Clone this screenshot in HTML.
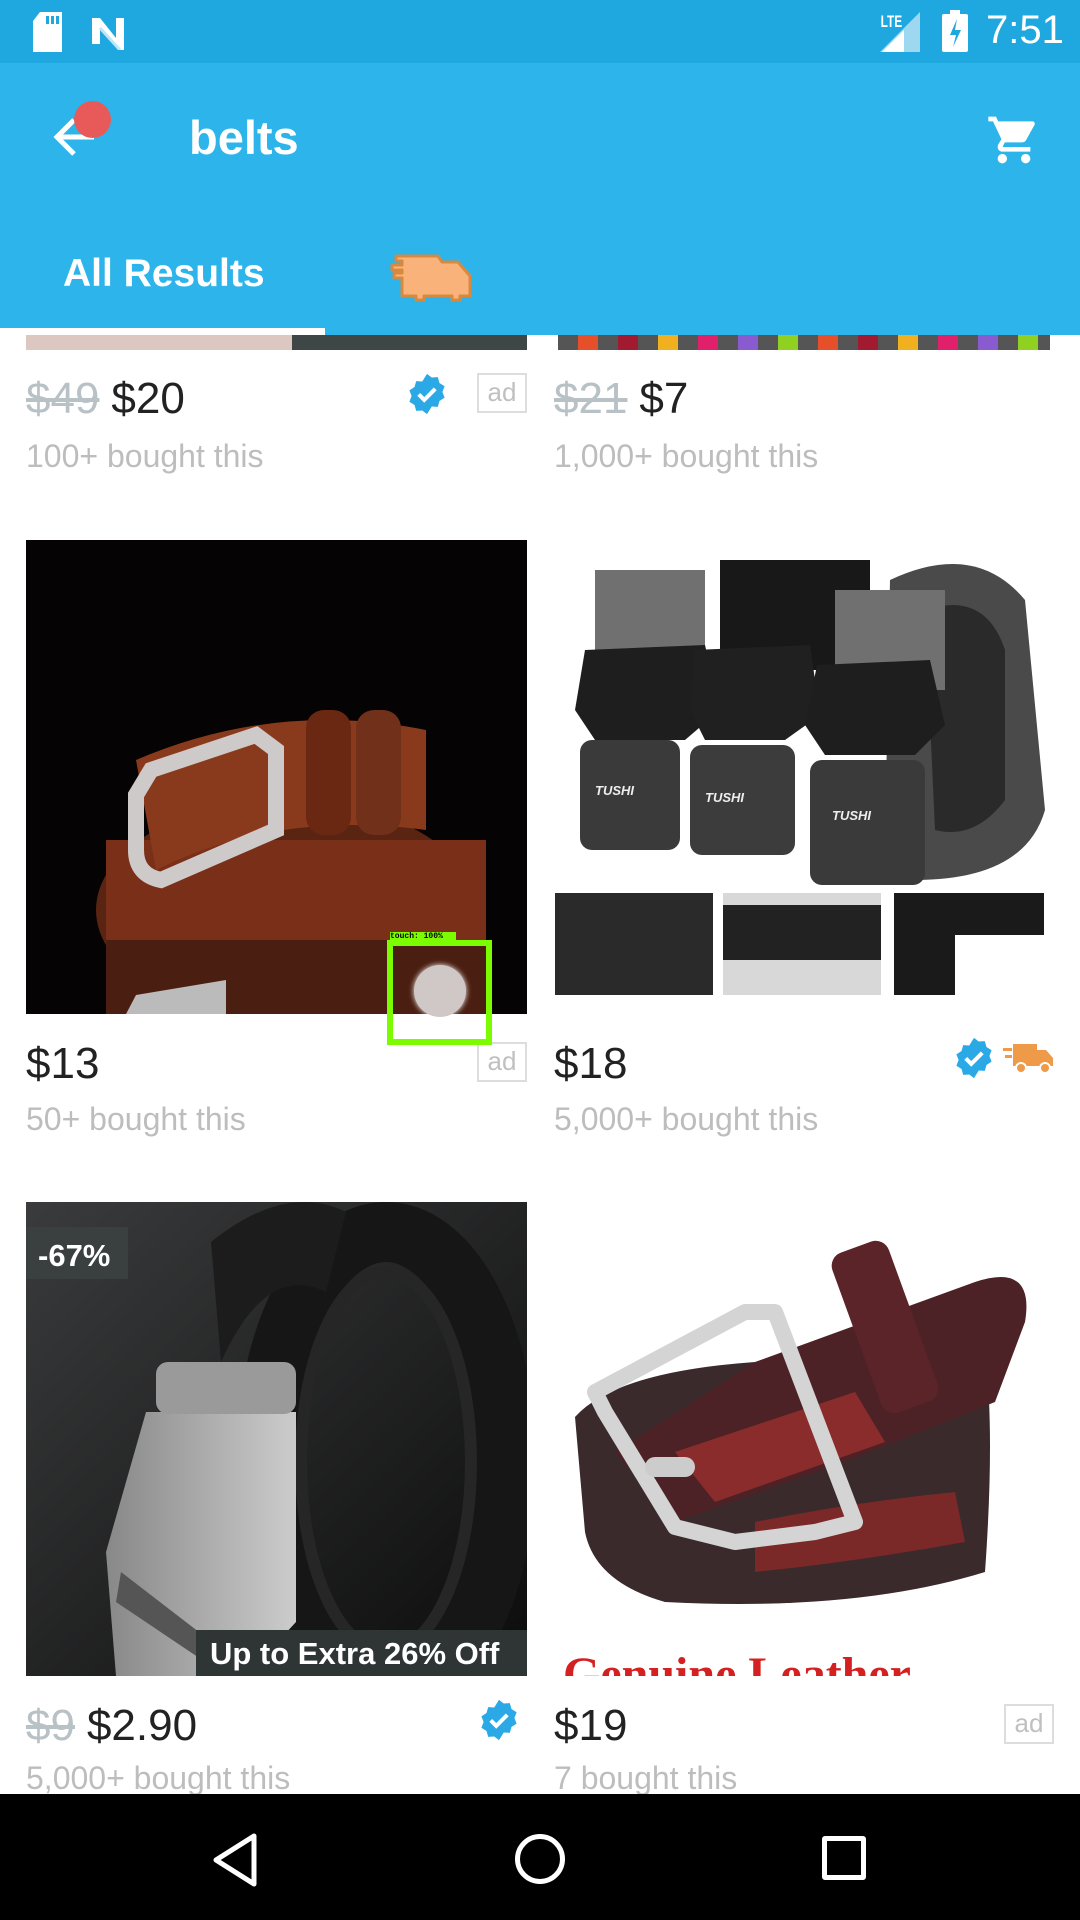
<!DOCTYPE html>
<html><head><meta charset="utf-8"><style>
*{margin:0;padding:0;box-sizing:border-box}
body{width:1080px;height:1920px;position:relative;overflow:hidden;background:#fff;font-family:"Liberation Sans",sans-serif}
.a{position:absolute}
.price{position:absolute;font-size:44px;color:#222}
.old{color:#b8c2c6;text-decoration:line-through;margin-right:12px}
.bought{position:absolute;font-size:32px;color:#bdbdbd}
.ad{position:absolute;width:50px;height:40px;border:2px solid #ddd;color:#c0c0c0;font-size:26px;text-align:center;line-height:34px}
</style></head><body>
<div class="a" style="left:26px;top:330px;width:266px;height:20px;background:#dcc8c0"></div>
<div class="a" style="left:292px;top:330px;width:235px;height:20px;background:#3e4646"></div>
<div class="a" style="left:558px;top:330px;width:492px;height:20px;background:repeating-linear-gradient(90deg,#555 0 20px,#e5502a 20px 40px,#555 40px 60px,#a01a30 60px 80px,#555 80px 100px,#f0b020 100px 120px,#555 120px 140px,#e0206a 140px 160px,#555 160px 180px,#8a5ad0 180px 200px,#555 200px 220px,#90d020 220px 240px)"></div>

<div class="price" style="left:26px;top:374px"><span class="old">$49</span>$20</div>
<svg class="a" style="left:405px;top:372px" width="44" height="44" viewBox="0 0 24 24"><path d="M12 1l2.6 2 3.3-.2.9 3.2 2.8 1.8-1.2 3.1 1.2 3.1-2.8 1.8-.9 3.2-3.3-.2L12 23l-2.6-2-3.3.2-.9-3.2-2.8-1.8 1.2-3.1-1.2-3.1 2.8-1.8.9-3.2 3.3.2z" fill="#2ba9e6"/><path d="M7.5 12.2l3 3 6-6" stroke="#fff" stroke-width="2.2" fill="none"/></svg>
<div class="ad" style="left:477px;top:373px">ad</div>
<div class="bought" style="left:26px;top:438px">100+ bought this</div>
<div class="price" style="left:554px;top:374px"><span class="old">$21</span>$7</div>
<div class="bought" style="left:554px;top:438px">1,000+ bought this</div>

<svg class="a" style="left:26px;top:540px" width="501" height="474" viewBox="0 0 501 474">
<rect width="501" height="474" fill="#050303"/>
<ellipse cx="260" cy="370" rx="190" ry="110" fill="#5a2412"/>
<rect x="80" y="310" width="380" height="164" fill="#4a1e10"/>
<rect x="80" y="300" width="380" height="100" fill="#7a3018"/>
<path d="M110 220 Q250 160 400 190 L400 290 Q250 270 130 330z" fill="#8a3a1c"/>
<rect x="280" y="170" width="45" height="125" rx="18" fill="#6a2812"/>
<rect x="330" y="170" width="45" height="125" rx="18" fill="#70301a"/>
<path d="M125 230 L230 195 L250 210 L250 290 L135 340 Q110 335 110 310 L110 255Z" fill="none" stroke="#cfcaca" stroke-width="16"/>
<path d="M110 455 L200 440 L200 474 L100 474Z" fill="#bbb"/>
</svg>
<div class="price" style="left:26px;top:1039px">$13</div>
<div class="ad" style="left:477px;top:1042px">ad</div>
<div class="bought" style="left:26px;top:1101px">50+ bought this</div>

<div class="a" style="left:390px;top:932px;width:66px;height:10px;background:#7cfc00;font:bold 8px 'Liberation Mono',monospace;color:#000;line-height:10px">touch: 100%</div>
<div class="a" style="left:387px;top:940px;width:105px;height:105px;border:6px solid #7cfc00"></div>
<div class="a" style="left:414px;top:965px;width:52px;height:52px;border-radius:50%;background:#cfc8c6;box-shadow:0 0 6px #fff"></div>

<svg class="a" style="left:555px;top:540px" width="498" height="474" viewBox="0 0 498 474">
<rect width="498" height="474" fill="#fff"/>
<path d="M335 40 Q420 0 470 60 L490 270 Q470 340 360 340 L330 300Z" fill="#4a4a4a"/>
<path d="M370 70 Q430 50 450 110 L450 260 Q420 300 380 290Z" fill="#2a2a2a"/>
<rect x="40" y="30" width="110" height="110" fill="#707070"/>
<rect x="165" y="20" width="150" height="110" fill="#181818"/>
<rect x="280" y="50" width="110" height="100" fill="#707070"/>
<path d="M30 110 L150 105 L165 170 L130 200 L40 200 L20 170Z" fill="#1e1e1e"/>
<path d="M140 110 L255 105 L265 175 L230 200 L150 200 L135 170Z" fill="#202020"/>
<path d="M262 125 L375 120 L390 185 L360 215 L270 215 L250 185Z" fill="#1e1e1e"/>
<rect x="25" y="200" width="100" height="110" rx="12" fill="#3a3a3a"/>
<rect x="135" y="205" width="105" height="110" rx="12" fill="#3c3c3c"/>
<rect x="255" y="220" width="115" height="125" rx="12" fill="#3a3a3a"/>
<text x="40" y="255" font-size="13" fill="#eee" font-style="italic" font-weight="bold">TUSHI</text>
<text x="150" y="262" font-size="13" fill="#eee" font-style="italic" font-weight="bold">TUSHI</text>
<text x="277" y="280" font-size="13" fill="#eee" font-style="italic" font-weight="bold">TUSHI</text>
<rect x="0" y="350" width="498" height="124" fill="#fff"/>
<rect x="0" y="353" width="158" height="102" fill="#2a2a2a"/>
<rect x="168" y="353" width="158" height="102" fill="#d8d8d8"/>
<rect x="168" y="365" width="158" height="55" fill="#222"/>
<rect x="339" y="353" width="150" height="102" fill="#1a1a1a"/>
<rect x="400" y="395" width="98" height="60" fill="#fff"/>
</svg>
<div class="price" style="left:554px;top:1039px">$18</div>
<svg class="a" style="left:952px;top:1036px" width="44" height="44" viewBox="0 0 24 24"><path d="M12 1l2.6 2 3.3-.2.9 3.2 2.8 1.8-1.2 3.1 1.2 3.1-2.8 1.8-.9 3.2-3.3-.2L12 23l-2.6-2-3.3.2-.9-3.2-2.8-1.8 1.2-3.1-1.2-3.1 2.8-1.8.9-3.2 3.3.2z" fill="#2ba9e6"/><path d="M7.5 12.2l3 3 6-6" stroke="#fff" stroke-width="2.2" fill="none"/></svg>
<svg class="a" style="left:1003px;top:1040px" width="52" height="36" viewBox="0 0 52 36"><rect x="10" y="4" width="24" height="22" fill="#ef9a48"/><path d="M34 10h9l7 8v8H34z" fill="#ef9a48"/><circle cx="18" cy="28" r="5" fill="#ef9a48" stroke="#fff" stroke-width="2"/><circle cx="42" cy="28" r="5" fill="#ef9a48" stroke="#fff" stroke-width="2"/><rect x="0" y="8" width="9" height="3" fill="#ef9a48"/><rect x="2" y="15" width="7" height="3" fill="#ef9a48"/></svg>
<div class="bought" style="left:554px;top:1101px">5,000+ bought this</div>

<svg class="a" style="left:26px;top:1202px" width="501" height="474" viewBox="0 0 501 474">
<defs><linearGradient id="g3" x1="0" y1="0" x2="1" y2="1"><stop offset="0" stop-color="#3a3b3c"/><stop offset="1" stop-color="#0c0c0c"/></linearGradient>
<linearGradient id="m" x1="0" x2="1"><stop offset="0" stop-color="#888"/><stop offset="1" stop-color="#ccc"/></linearGradient></defs>
<rect width="501" height="474" fill="url(#g3)"/>
<ellipse cx="360" cy="260" rx="120" ry="230" fill="none" stroke="#161616" stroke-width="60"/>
<ellipse cx="360" cy="260" rx="85" ry="190" fill="none" stroke="#262626" stroke-width="12"/>
<path d="M185 40 Q260 -20 320 10 L300 90 Q240 60 195 160Z" fill="#1c1c1c"/>
<path d="M120 210 L270 210 L270 420 L220 474 L90 474 L80 350Z" fill="url(#m)"/>
<rect x="130" y="160" width="140" height="52" rx="12" fill="#9a9a9a"/>
<path d="M95 370 L230 474 L200 474 L90 400Z" fill="#555"/>
<rect x="0" y="25" width="102" height="52" fill="#3a3f3f"/>
<text x="12" y="64" font-size="31" font-weight="bold" fill="#fff">-67%</text>
<rect x="170" y="428" width="331" height="46" fill="#2f3535"/>
<text x="184" y="462" font-size="31" font-weight="bold" fill="#fff">Up to Extra 26% Off</text>
</svg>
<div class="price" style="left:26px;top:1701px"><span class="old">$9</span>$2.90</div>
<svg class="a" style="left:477px;top:1698px" width="44" height="44" viewBox="0 0 24 24"><path d="M12 1l2.6 2 3.3-.2.9 3.2 2.8 1.8-1.2 3.1 1.2 3.1-2.8 1.8-.9 3.2-3.3-.2L12 23l-2.6-2-3.3.2-.9-3.2-2.8-1.8 1.2-3.1-1.2-3.1 2.8-1.8.9-3.2 3.3.2z" fill="#2ba9e6"/><path d="M7.5 12.2l3 3 6-6" stroke="#fff" stroke-width="2.2" fill="none"/></svg>
<div class="bought" style="left:26px;top:1760px">5,000+ bought this</div>

<svg class="a" style="left:555px;top:1202px" width="498" height="474" viewBox="0 0 498 474">
<rect width="498" height="474" fill="#fff"/>
<path d="M20 215 Q60 170 200 160 L430 150 Q440 230 430 370 Q300 410 110 400 Q40 380 30 330Z" fill="#3a2a2c"/>
<path d="M60 250 L200 160 L420 80 Q480 60 470 120 L440 200 L290 260 L120 320Z" fill="#4c2226"/>
<path d="M120 250 L300 190 L330 240 L160 300Z" fill="#8a2c2c"/>
<path d="M200 320 Q300 300 400 290 L410 340 Q300 360 200 370Z" fill="#7a2828"/>
<rect x="300" y="40" width="60" height="170" rx="14" fill="#5a2428" transform="rotate(-20 330 125)"/>
<path d="M40 190 L190 110 L220 110 L300 320 L260 330 L180 340 L120 325 L50 210Z" fill="none" stroke="#d4d4d4" stroke-width="16" stroke-linejoin="round"/>
<rect x="90" y="255" width="50" height="20" rx="10" fill="#ccc"/>
<rect x="0" y="430" width="498" height="44" fill="#fff"/>
<text x="8" y="488" font-family="Liberation Serif,serif" font-size="48" font-weight="bold" fill="#d42020">Genuine Leather</text>
</svg>
<div class="a" style="left:555px;top:1676px;width:498px;height:8px;background:#fff"></div>
<div class="price" style="left:554px;top:1701px">$19</div>
<div class="ad" style="left:1004px;top:1704px">ad</div>
<div class="bought" style="left:554px;top:1760px">7 bought this</div>

<div class="a" style="left:0;top:0;width:1080px;height:63px;background:#1fa8e0"></div>
<svg class="a" style="left:30px;top:12px" width="36" height="40" viewBox="0 0 36 40"><path d="M10 0h22v40H3V9z" fill="#fff"/><rect x="16" y="4" width="3" height="8" fill="#1fa8e0"/><rect x="21" y="4" width="3" height="8" fill="#1fa8e0"/><rect x="26" y="4" width="3" height="8" fill="#1fa8e0"/></svg>
<svg class="a" style="left:90px;top:14px" width="40" height="36" viewBox="0 0 40 36"><path d="M2 4h8l16 20V4h8v32h-6L10 14v16H2z" fill="#fff"/><path d="M10 14l20 22" stroke="#bfe6f6" stroke-width="3"/></svg>
<div class="a" style="left:876px;top:12px;color:#fff;font-size:17px;font-weight:bold;transform:scaleX(.7)">LTE</div>
<svg class="a" style="left:880px;top:12px" width="42" height="40" viewBox="0 0 42 40"><path d="M40 0v40H0z" fill="#9ed7f0"/><path d="M24 18v22H2z" fill="#fff"/></svg>
<svg class="a" style="left:942px;top:10px" width="26" height="42" viewBox="0 0 26 42"><rect x="8" y="0" width="10" height="5" fill="#fff"/><rect x="0" y="4" width="26" height="38" rx="2" fill="#fff"/><path d="M15 9l-7 16h6l-3 12 8-17h-6z" fill="#1fa8e0"/></svg>
<div class="a" style="left:986px;top:8px;color:#fff;font-size:40px">7:51</div>

<div class="a" style="left:0;top:63px;width:1080px;height:272px;background:#2db4ea"></div>
<svg class="a" style="left:50px;top:112px" width="50" height="50" viewBox="0 0 50 50"><path d="M44 25H8M24 8L7 25l17 17" stroke="#fff" stroke-width="5" fill="none"/></svg>
<div class="a" style="left:74px;top:101px;width:37px;height:37px;border-radius:50%;background:#e85a5a"></div>
<div class="a" style="left:189px;top:110px;color:#fff;font-size:47px;font-weight:bold">belts</div>
<svg class="a" style="left:986px;top:112px" width="56" height="56" viewBox="0 0 24 24"><path d="M7 18c-1.1 0-2 .9-2 2s.9 2 2 2 2-.9 2-2-.9-2-2-2zM1 2v2h2l3.6 7.6-1.4 2.4c-.1.3-.2.6-.2 1 0 1.1.9 2 2 2h12v-2H7.4c-.1 0-.2-.1-.2-.2v-.1l.9-1.7h7.4c.8 0 1.4-.4 1.7-1l3.6-6.5c.1-.2.1-.3.1-.5 0-.6-.4-1-1-1H5.2l-.9-2H1zm16 16c-1.1 0-2 .9-2 2s.9 2 2 2 2-.9 2-2-.9-2-2-2z" fill="#fff"/></svg>
<div class="a" style="left:63px;top:252px;color:#fff;font-size:39px;font-weight:bold">All Results</div>
<svg class="a" style="left:390px;top:250px" width="84" height="54" viewBox="0 0 84 54"><path d="M6 6h42l4 6h16l12 14v20H70v4h-8v-4H34v4h-8v-4H12V28H4v-5h8v-3H2v-5h10v-4H6z" fill="#f8b27a" stroke="#d8893e" stroke-width="3" stroke-linejoin="round"/></svg>
<div class="a" style="left:0;top:328px;width:325px;height:7px;background:#fff"></div>

<div class="a" style="left:0;top:1794px;width:1080px;height:126px;background:#000"></div>
<svg class="a" style="left:210px;top:1832px" width="50" height="56" viewBox="0 0 50 56"><path d="M44 4L6 28l38 24z" fill="none" stroke="#fff" stroke-width="5" stroke-linejoin="round"/></svg>
<div class="a" style="left:515px;top:1834px;width:50px;height:50px;border:5px solid #fff;border-radius:50%"></div>
<div class="a" style="left:822px;top:1836px;width:44px;height:44px;border:5px solid #fff;border-radius:3px"></div>
</body></html>
